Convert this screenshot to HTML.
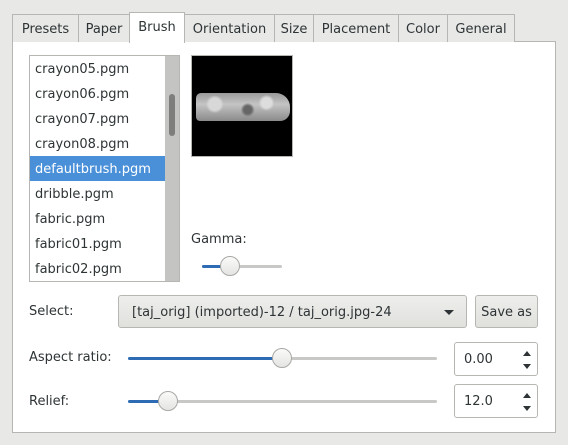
<!DOCTYPE html>
<html><head><style>
*{box-sizing:border-box;margin:0;padding:0}
body{width:568px;height:445px;background:#e8e8e7;font-family:"DejaVu Sans","Liberation Sans",sans-serif;font-size:13px;color:#2e3436;position:relative;overflow:hidden}
.a{position:absolute}
.tab{position:absolute;top:14px;height:28px;border:1px solid #b6b6b3;border-bottom:none;background:#e8e8e7;line-height:30px;text-align:center;color:#2e3436}
.panel{left:12px;top:41px;width:544px;height:392px;background:#fff;border:1px solid #b6b6b3}
.li{position:absolute;left:0;width:135px;height:25px;line-height:27px;padding-left:5px;color:#2e3436}
.trough{position:absolute;height:3px;background:#c8c8c6;border-radius:2px}
.fill{position:absolute;height:3px;background:#2d6cb5;border-radius:2px}
.knob{position:absolute;width:20px;height:20px;border-radius:50%;border:1px solid #a8a8a5;background:linear-gradient(#fafafa,#e4e4e2)}
.btn{position:absolute;border:1px solid #b6b6b3;border-radius:3px;background:linear-gradient(#eeeeec,#e0e0dd);line-height:33px}
.spin{position:absolute;width:84px;height:34px;border:1px solid #b6b6b3;border-radius:3px;background:#fff;line-height:34px;padding-left:9px}
.up,.dn{position:absolute;right:6px;width:0;height:0;border-left:4px solid transparent;border-right:4px solid transparent}
.up{top:8px;border-bottom:5px solid #2e3436}
.dn{top:21px;border-top:5px solid #2e3436}
</style></head><body>
<div class="a panel"></div>
<div class="tab" style="left:12px;width:67px">Presets</div>
<div class="tab" style="left:78px;width:52px">Paper</div>
<div class="tab" style="left:184px;width:91px">Orientation</div>
<div class="tab" style="left:274px;width:40px">Size</div>
<div class="tab" style="left:313px;width:86px">Placement</div>
<div class="tab" style="left:398px;width:50px">Color</div>
<div class="tab" style="left:447px;width:68px">General</div>
<div class="tab" style="left:129px;top:12px;width:56px;height:31px;background:#fff;line-height:30px">Brush</div>

<div class="a" style="left:29px;top:55px;width:151px;height:227px;border:1px solid #b6b6b3;background:#fff;overflow:hidden">
 <div class="li" style="top:0">crayon05.pgm</div>
 <div class="li" style="top:25px">crayon06.pgm</div>
 <div class="li" style="top:50px">crayon07.pgm</div>
 <div class="li" style="top:75px">crayon08.pgm</div>
 <div class="li" style="top:100px;background:#4a90d9;color:#fff">defaultbrush.pgm</div>
 <div class="li" style="top:125px">dribble.pgm</div>
 <div class="li" style="top:150px">fabric.pgm</div>
 <div class="li" style="top:175px">fabric01.pgm</div>
 <div class="li" style="top:200px">fabric02.pgm</div>
 <div class="a" style="left:135px;top:0;width:15px;height:227px;background:#c4c4c2"></div>
 <div class="a" style="left:139px;top:38px;width:6px;height:42px;background:#7e7e7c;border-radius:3px"></div>
</div>

<div class="a" style="left:191px;top:55px;width:102px;height:102px;background:#000;border:1px solid #b6b6b3">
 <div class="a" style="left:4px;top:37px;width:94px;height:28px;background:radial-gradient(circle at 20% 40%,#d8d8d8 0 6px,transparent 9px),radial-gradient(circle at 55% 60%,#666 0 4px,transparent 7px),radial-gradient(circle at 75% 35%,#ddd 0 5px,transparent 8px),linear-gradient(#9a9a9a,#c4c4c4 40%,#8a8a8a);border-radius:5px 14px 10px 4px"></div>
</div>

<div class="a" style="left:191px;top:232px">Gamma:</div>
<div class="trough" style="left:202px;top:265px;width:80px"></div>
<div class="fill" style="left:202px;top:265px;width:20px"></div>
<div class="knob" style="left:220px;top:256px"></div>

<div class="a" style="left:29px;top:304px">Select:</div>
<div class="btn" style="left:118px;top:295px;width:349px;height:33px;padding-left:13px">[taj_orig] (imported)-12 / taj_orig.jpg-24
 <div class="a" style="right:12px;top:14px;border-left:5px solid transparent;border-right:5px solid transparent;border-top:5px solid #2e3436"></div></div>
<div class="btn" style="left:475px;top:295px;width:63px;height:33px;text-align:center">Save as</div>

<div class="a" style="left:29px;top:350px">Aspect ratio:</div>
<div class="trough" style="left:128px;top:357px;width:309px"></div>
<div class="fill" style="left:128px;top:357px;width:155px"></div>
<div class="knob" style="left:272px;top:348px"></div>
<div class="spin" style="left:454px;top:342px">0.00<div class="up"></div><div class="dn"></div></div>

<div class="a" style="left:29px;top:394px">Relief:</div>
<div class="trough" style="left:128px;top:400px;width:309px"></div>
<div class="fill" style="left:128px;top:400px;width:40px"></div>
<div class="knob" style="left:158px;top:391px"></div>
<div class="spin" style="left:454px;top:384px">12.0<div class="up"></div><div class="dn"></div></div>
</body></html>
